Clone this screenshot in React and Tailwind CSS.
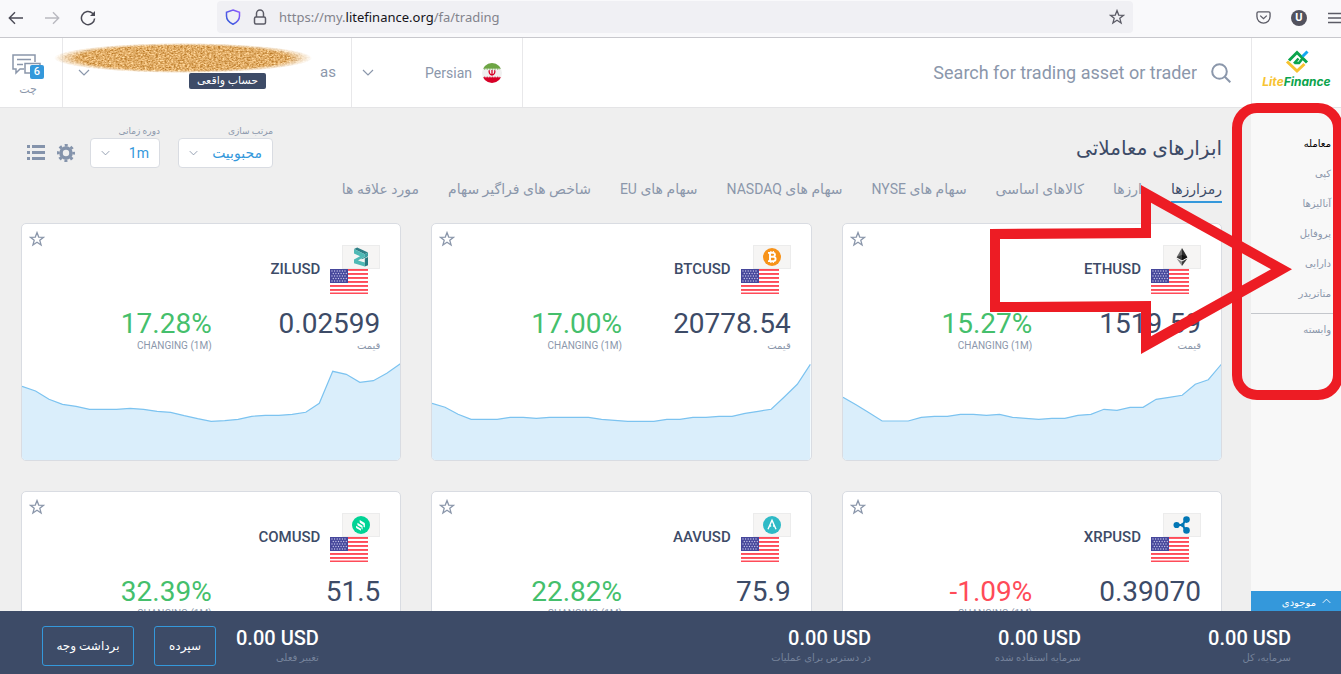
import React from "react";

const LATIN_FA = "font-[Roboto,'DejaVu_Sans',sans-serif]";

const SPARK_ZIL = [24.3, 29, 37.3, 42.3, 44.3, 47.3, 47.3, 47.3, 46.3, 47.3, 49.3, 50.3, 53.7, 56.7, 59.3, 58.7, 57.3, 54.3, 53.3, 53.3, 52.3, 50.3, 41.3, 9.3, 12.3, 20.3, 18.7, 11.3, 1.7];
const SPARK_BTC = [41.3, 45.3, 52.3, 57.3, 57.3, 57.3, 55.3, 55.3, 56.3, 55.3, 55.3, 55.3, 55.3, 57.3, 58.3, 59.3, 59.3, 59.3, 57.3, 57.3, 55.3, 55.3, 54.3, 54.3, 51.3, 49.3, 47.3, 35, 22.3, 2.3];
const SPARK_ETH = [35.3, 42.7, 50.7, 59, 59, 59, 55.3, 54.3, 54.3, 52.3, 52.3, 53.3, 52.3, 55.3, 56.3, 57.3, 56.3, 56.3, 53.3, 52.3, 47.3, 48.3, 45.3, 45.3, 37.3, 35.3, 33.3, 22.3, 17.7, 2.3];

const ASSETS = [
  { symbol: "ETHUSD", price: "1519.59", change: "15.27%", coin: EthCoin, points: SPARK_ETH },
  { symbol: "BTCUSD", price: "20778.54", change: "17.00%", coin: BtcCoin, points: SPARK_BTC },
  { symbol: "ZILUSD", price: "0.02599", change: "17.28%", coin: ZilCoin, points: SPARK_ZIL },
  { symbol: "XRPUSD", price: "0.39070", change: "-1.09%", coin: XrpCoin, points: SPARK_BTC },
  { symbol: "AAVUSD", price: "75.9", change: "22.82%", coin: AaveCoin, points: SPARK_ETH },
  { symbol: "COMUSD", price: "51.5", change: "32.39%", coin: CompCoin, points: SPARK_ZIL },
];

const TABS = ["رمزارزها", "ارزها", "کالاهای اساسی", "سهام های NYSE", "سهام های NASDAQ", "سهام های EU", "شاخص های فراگیر سهام", "مورد علاقه ها"];
const MENU = ["معامله", "کپی", "آنالیزها", "پروفایل", "دارایی", "متاتریدر"];
const BALANCES = ["سرمایه، کل", "سرمایه استفاده شده", "در دسترس برای عملیات"];

function EthCoin() {
  return (
    <svg viewBox="0 0 20 20" className="size-5">
      <path d="M10 1 4.6 10.2 10 13.3Z" fill="#6b6b6b" />
      <path d="M10 1v12.3l5.4-3.1Z" fill="#2b2b2b" />
      <path d="M10 7.8 4.6 10.2 10 13.3Z" fill="#3a3a3a" />
      <path d="M10 7.8v5.5l5.4-3.1Z" fill="#111" />
      <path d="M4.6 11.4 10 19v-4.5Z" fill="#8a8a8a" />
      <path d="M15.4 11.4 10 19v-4.5Z" fill="#3a3a3a" />
    </svg>
  );
}

function BtcCoin() {
  return (
    <svg viewBox="0 0 20 20" className="size-5">
      <circle cx="10" cy="10" r="9" fill="#f7931a" />
      <g fill="none" stroke="#fff" strokeWidth="1.9">
        <path d="M8 5.800v8.400M6 5.900h5a1.900 1.900 0 0 1 0 3.900H8M11 9.900h.5a2.100 2.100 0 0 1 0 4.200H6" />
        <path d="M8.900 4v2M11.300 4v2M8.900 14v2M11.300 14v2" strokeWidth="1.200" />
      </g>
    </svg>
  );
}

function ZilCoin() {
  return (
    <svg viewBox="0 0 20 20" className="size-5">
      <path d="M3 2 6.2.6 17 5.4l-3.2 1.9Z" fill="#2f7f86" />
      <path d="M3 2v4.400l6 2.800L3 12.600v3.600l10.800 3.400v-4.200L7 13.400l6.800-4V7.300Z" fill="#4fb9b5" />
      <path d="M13.800 7.300 17 5.400v3.900l-4.500 2.700-3 .2 4.300-2.800Z" fill="#3d9ea0" />
      <path d="M8.600 13.400 13.800 10.900v4Z" fill="#f6f5f4" />
      <path d="M13.800 11.600 17 9.900v8.300l-3.200 1.400Z" fill="#2a7a80" />
    </svg>
  );
}

function XrpCoin() {
  return (
    <svg viewBox="0 0 20 20" className="size-5">
      <path d="M5 10h5.500l3-5M10.500 10l3 5" fill="none" stroke="#0277b5" strokeWidth="2.200" />
      <circle cx="4.600" cy="10" r="3.100" fill="#0277b5" />
      <circle cx="14.500" cy="4.600" r="3.300" fill="#0277b5" />
      <circle cx="14.500" cy="15.400" r="3.300" fill="#0277b5" />
      <circle cx="10.600" cy="10" r="2" fill="#0277b5" />
    </svg>
  );
}

function AaveCoin() {
  return (
    <svg viewBox="0 0 20 20" className="size-5">
      <circle cx="10" cy="10" r="9" fill="#2ebac6" />
      <path d="m6 14.2 4-9 4 9M7.6 11h1.6M11 11h1.6" fill="none" stroke="#fff" strokeWidth="1.4" />
    </svg>
  );
}

function CompCoin() {
  return (
    <svg viewBox="0 0 20 20" className="size-5">
      <circle cx="10" cy="10" r="9" fill="#00d395" />
      <g fill="#fff">
        <path d="m5 10.800 5 2.900v2.100L5.600 13.200a1.200 1.200 0 0 1-.6-1Z" />
        <path d="m6.400 7.700 4.600 2.700c.4.200.6.600.6 1v3.100l-1-.6v-1.400L7 10.400a1.200 1.200 0 0 1-.6-1Z" />
        <path d="m8.700 5 4.600 2.700c.4.200.6.600.6 1v3.900l-1.400-.8V9.900L9.300 8a1.200 1.200 0 0 1-.6-1Z" />
      </g>
    </svg>
  );
}

function UsFlag() {
  return (
    <svg viewBox="0 0 38 25" className="h-[25px] w-[38px]">
      <rect width="38" height="25" fill="#fff" />
      {[0, 4, 8, 12, 16, 20, 23.5].map((y) => (
        <rect key={y} y={y} width="38" height="1.9" fill="#ff4b58" />
      ))}
      <rect width="18" height="14" fill="#46479b" />
      {[2, 4.5, 7, 9.5, 12].map((y, row) =>
        [2, 4.6, 7.2, 9.8, 12.4, 15].map((x) => (
          <circle key={`${x}-${y}`} cx={x + (row % 2 ? 1.3 : 0)} cy={y} r="0.65" fill="#c9c9ec" />
        ))
      )}
    </svg>
  );
}

function IranFlag() {
  return (
    <svg viewBox="0 0 20 20" className="size-5 shrink-0">
      <clipPath id="flag-round"><circle cx="10" cy="10" r="10" /></clipPath>
      <g clipPath="url(#flag-round)">
        <rect width="20" height="20" fill="#f0f0f0" />
        <rect width="20" height="5.6" fill="#6da544" />
        <rect y="14.4" width="20" height="5.6" fill="#d80027" />
        <path d="M2 6h16" stroke="#6da544" strokeDasharray="1.3 1.3" />
        <path d="M2 14.2h16" stroke="#d80027" strokeDasharray="1.3 1.3" />
      </g>
      <path d="M7.4 7.2c-.8 2 .2 4.4 2.6 4.8 2.400-.4 3.400-2.800 2.600-4.800M10 7v5.500" fill="none" stroke="#d80027" strokeWidth="1.300" />
    </svg>
  );
}

function Chevron({ className, up }) {
  return (
    <svg viewBox="0 0 12 7" className={className} fill="none" stroke="currentColor" strokeWidth="1.2">
      <path d={up ? "m1 6 5-5 5 5" : "m1 1 5 5 5-5"} />
    </svg>
  );
}

function Star({ className }) {
  return (
    <svg viewBox="0 0 16 16" className={className} fill="none" stroke="currentColor" strokeWidth="1.3">
      <path d="m8 1.600 1.700 4.500 4.800.200-3.700 3 1.300 4.700L8 11.300 3.900 14l1.300-4.700-3.700-3 4.800-.200Z" />
    </svg>
  );
}

function BrowserBar() {
  return (
    <div className="flex h-[38px] shrink-0 items-center border-b border-[#c8c8cd] bg-[#f9f9fb] text-[#5b5b66]">
      <div className="mb-[2px] flex w-[217px] shrink-0 items-center gap-5 pl-2">
        <button type="button" aria-label="Back" className="text-[#4a4a55]">
          <svg viewBox="0 0 16 16" className="size-4" fill="none" stroke="currentColor" strokeWidth="1.400"><path d="M15 8H1.500M7 2.200 1.300 8 7 13.800" /></svg>
        </button>
        <button type="button" aria-label="Forward" className="text-[#b9b9c0]">
          <svg viewBox="0 0 16 16" className="size-4" fill="none" stroke="currentColor" strokeWidth="1.400"><path d="M1 8h13.500M9 2.200 14.700 8 9 13.800" /></svg>
        </button>
        <button type="button" aria-label="Reload" className="text-[#4a4a55]">
          <svg viewBox="0 0 16 16" className="size-4" fill="none" stroke="currentColor" strokeWidth="1.500"><path d="M14.600 8.500A6.600 6.600 0 1 1 12.500 3.200L14 4.700" /><path d="M15 1v5h-5Z" fill="currentColor" stroke="none" /></svg>
        </button>
      </div>
      <div className="mb-[3px] flex h-8 flex-1 items-center rounded bg-[#f0f0f4] px-2">
        <svg viewBox="0 0 16 16" className="size-4" fill="none" strokeWidth="1.500">
          <linearGradient id="shield" x1="0" y1="1" x2="1" y2="0"><stop stopColor="#2b5bd7" /><stop offset="1" stopColor="#9059ff" /></linearGradient>
          <path d="M8 1 14.500 3.200V7c0 4-2.700 6.500-6.500 8.300C4.200 13.500 1.500 11 1.500 7V3.200Z" stroke="url(#shield)" />
        </svg>
        <svg viewBox="0 0 14 16" className="ml-3 h-4 w-[14px]" fill="none" stroke="currentColor" strokeWidth="1.500"><rect x="1.500" y="8" width="11" height="7" rx="1.500" /><path d="M3.500 8V4.500a3.500 3.500 0 0 1 7 0V8" /></svg>
        <span className="ml-3 pt-[2px] font-['Noto_Sans',sans-serif] text-[13px] text-[#83838c]">
          https://my.<span className="text-[#15141a]">litefinance.org</span>/fa/trading
        </span>
        <button type="button" aria-label="Bookmark" className="ml-auto"><Star className="size-4" /></button>
      </div>
      <div className="mb-[2px] flex w-[208px] shrink-0 items-center justify-end gap-5">
        <svg viewBox="0 0 16 16" className="size-[15px]" fill="none" stroke="currentColor" strokeWidth="1.400"><path d="M2.500 2h11a1.500 1.500 0 0 1 1.500 1.500V7A7 7 0 0 1 1 7V3.500A1.500 1.500 0 0 1 2.500 2Z" /><path d="m4.500 6 3.500 3.200L11.500 6" /></svg>
        <span className="size-4 rounded-full bg-[#52525e] text-center font-[Roboto,sans-serif] text-[11px] leading-4 font-bold text-white">U</span>
        <button type="button" aria-label="Menu">
          <svg viewBox="0 0 14 12" className="h-3 w-[14px]" stroke="currentColor" strokeWidth="1.300"><path d="M1 1.500h13M1 6h13M1 10.500h13" /></svg>
        </button>
      </div>
    </div>
  );
}

function Logo() {
  return (
    <a href="#home" className="flex w-[90px] shrink-0 flex-col items-center border-l border-[#e8e8ea] pt-3">
      <svg viewBox="0 0 24 24" className="size-6" fill="none" strokeWidth="3">
        <path d="m2 11.500 10 9.500 7.500-7" stroke="#f7c331" />
        <path d="M4 10.500 12 2.500l10 10" stroke="#0ba44c" />
        <path d="M9.500 13h4.500l3.500-4.500M9 13.500l4.500-5" stroke="#0ba44c" strokeWidth="2.600" />
        <path d="m17.500 6.500 5-5" stroke="#12a8f0" />
      </svg>
      <span dir="ltr" className="font-[Inter,sans-serif] text-[12px] leading-4 font-bold text-[#0ba44c] italic">
        <span className="text-[#f7c331]">Lite</span>Finance
      </span>
    </a>
  );
}

function Header() {
  return (
    <header className="relative flex h-[70px] shrink-0 border-b border-[#e4e4e6] bg-white text-[#8b97ab]">
      <Logo />
      <label className="flex flex-1 items-center gap-[14px] pr-5">
        <svg viewBox="0 0 20 20" className="size-5" fill="none" stroke="currentColor" strokeWidth="2"><circle cx="8.500" cy="8.500" r="7.300" /><path d="m13.800 13.800 5.500 5.500" /></svg>
        <input aria-label="Search" placeholder="Search for trading asset or trader" className="min-w-0 flex-1 text-[18px] outline-none placeholder:text-[#8b97ab]" />
      </label>
      <label className="relative flex w-[172px] shrink-0 items-center gap-[10px] border-x border-[#e8e8ea] pr-5">
        <IranFlag />
        <select aria-label="Language" className="flex-1 appearance-none bg-transparent pt-0.5 text-[14px] outline-none"><option>Persian</option></select>
        <Chevron className="absolute left-[10px] h-[7px] w-3" />
      </label>
      <button type="button" className="flex w-[288px] shrink-0 items-center pr-[15px] pl-[15px] text-[15px]">
        as
        <span className="mt-[17px] mr-[54px] rounded-xs bg-[#3d4b67] px-2 text-[11px] leading-4 text-white">حساب واقعی</span>
        <Chevron className="mr-auto h-[7px] w-3" />
      </button>
      <button type="button" className="flex w-[63px] shrink-0 flex-col items-center border-r border-[#e8e8ea] pt-4 pr-[6px] text-[11px]">
        <span className="relative">
          <svg viewBox="0 0 32 26" className="h-[26px] w-8" fill="none" stroke="currentColor" strokeWidth="1.500">
            <path d="M23 8V1H1v14h3v4l4-4h4M13 9.500h15V19H13ZM5 5.500h14M5 10.500h6" />
          </svg>
          <span className="absolute top-[11px] left-[18px] size-[14px] rounded-xs bg-[#3498db] text-[11px] leading-[14px] font-medium text-white">6</span>
        </span>
        <span className="mt-0.5 leading-4">چت</span>
      </button>
      <svg viewBox="0 0 258 30" className="absolute top-[5px] left-[54px] h-[30px] w-[258px]">
        <defs>
          <radialGradient id="sand-fade"><stop offset="0.820" stopColor="#fff" /><stop offset="1" stopColor="#000" /></radialGradient>
          <mask id="sand-mask"><ellipse cx="129" cy="15" rx="129" ry="15" fill="url(#sand-fade)" /></mask>
          <filter id="sand-grain" x="0" y="0" width="100%" height="100%" colorInterpolationFilters="sRGB">
            <feTurbulence type="fractalNoise" baseFrequency="0.450 0.700" numOctaves="3" seed="4" />
            <feColorMatrix values="0.500 0 0 0 0.630 0.650 0 0 0 0.350 0.800 0 0 0 0.000 0 0 0 0 1" />
          </filter>
        </defs>
        <g mask="url(#sand-mask)"><rect width="258" height="30" filter="url(#sand-grain)" /></g>
      </svg>
    </header>
  );
}

function Filter({ label, value, width }) {
  return (
    <label className={`flex flex-col ${width}`}>
      <span className="text-[9px] leading-[14px] text-[#8b97ab]">{label}</span>
      <span className="relative flex h-[30px] items-center rounded-sm border border-[#d9dce2] bg-white">
        <select className="w-full appearance-none bg-transparent pr-[10px] text-[14px] text-[#3498db] outline-none"><option>{value}</option></select>
        <Chevron className="absolute left-[10px] h-[6px] w-[9px] text-[#8b97ab]" />
      </span>
    </label>
  );
}

function Toolbar() {
  return (
    <div className="flex items-end justify-between">
      <h1 className="pb-1 text-[20px] leading-8 text-[#3d4b67]">ابزارهای معاملاتی</h1>
      <div className="flex items-end gap-[18px] pl-[6px]">
        <Filter label="مرتب سازی" value="محبوبیت" width="w-[95px]" />
        <Filter label="دوره زمانی" value="1m" width="w-[70px]" />
        <div className="-mr-[3px] flex h-[30px] items-center gap-3 text-[#8493ab]">
          <button type="button" aria-label="Settings">
            <svg viewBox="0 0 18 18" className="size-[18px]" fill="none" stroke="currentColor">
              <circle cx="9" cy="9" r="5" strokeWidth="3.600" />
              <circle cx="9" cy="9" r="7.700" strokeWidth="2.600" strokeDasharray="3.024 3.024" strokeDashoffset="1.512" />
            </svg>
          </button>
          <button type="button" aria-label="List view">
            <svg viewBox="0 0 18 16" className="h-4 w-[18px]" fill="currentColor"><path d="M0 0h3v3H0zM5 0h13v3H5zM0 6h3v3H0zM5 6h13v3H5zM0 12h3v3H0zM5 12h13v3H5z" /></svg>
          </button>
        </div>
      </div>
    </div>
  );
}

function Sparkline({ points }) {
  const step = 380 / (points.length - 1);
  const line = points.map((y, i) => `${(i * step).toFixed(1)},${y}`).join(" ");
  return (
    <svg viewBox="0 0 380 98" preserveAspectRatio="none" className="mt-auto h-[98px] w-full">
      <polygon points={`0,98 ${line} 380,98`} fill="#daeefb" />
      <polyline points={line} fill="none" stroke="#7cc3f0" strokeWidth="1.200" />
    </svg>
  );
}

function AssetCard({ symbol, price, change, coin: Coin, points }) {
  const tone = change.startsWith("-") ? "text-[#ff4b58]" : "text-[#45bf6c]";
  return (
    <article className="flex h-[238px] flex-col overflow-hidden rounded-[5px] border border-[#d9dce2] bg-white">
      <div className="flex h-[70px] shrink-0 items-center pr-5 pl-[7px]">
        <div className="mt-[21px] flex w-[50px] flex-col">
          <span className="flex h-6 w-[38px] items-center justify-center border border-[#ececec] bg-[#f6f5f4]"><Coin /></span>
          <span className="mr-3"><UsFlag /></span>
        </div>
        <h2 className="mt-[20px] mr-[10px] text-[15px] font-medium text-[#3d4b67]">{symbol}</h2>
        <button type="button" aria-label="Add to favourites" className="mt-[7px] mr-auto self-start text-[#8b97ab]"><Star className="size-4" /></button>
      </div>
      <dl className="mt-[14px] grid grid-cols-2 pr-5 pl-[21px] text-[10px] leading-3 text-[#8b97ab]">
        <div className="flex flex-col-reverse">
          <dt>قیمت</dt>
          <dd dir="ltr" className="text-right text-[28px] leading-8 text-[#3d4b67]">{price}</dd>
        </div>
        <div className="flex flex-col-reverse">
          <dt dir="ltr" className="text-right">CHANGING (1M)</dt>
          <dd dir="ltr" className={`text-right text-[28px] leading-8 ${tone}`}>{change}</dd>
        </div>
      </dl>
      <Sparkline points={points} />
    </article>
  );
}

function Sidebar() {
  return (
    <aside className="flex w-[90px] shrink-0 flex-col bg-[#f8f8f8] text-[10px] text-[#8b97ab]">
      <nav className="flex flex-col pt-[21px]">
        {MENU.map((item, i) => (
          <a key={item} href={`#menu-${i}`} className={`pr-[10px] leading-[30px] ${i === 0 ? "text-black" : ""}`}>{item}</a>
        ))}
        <a href="#affiliate" className="mt-1 border-t border-[#c4c7cc] pr-[10px] leading-[32px]">وابسته</a>
      </nav>
      <button type="button" className="mt-auto flex h-5 items-center gap-[6px] bg-[#3498db] pr-[10px] text-white">
        <Chevron up className="h-[6px] w-[9px]" />
        <span className="pt-0.5">موجودی</span>
      </button>
    </aside>
  );
}

function Balance({ label, className = "" }) {
  return (
    <div className={`flex flex-col ${className}`}>
      <span dir="ltr" className="text-right text-[20px] leading-6 font-medium whitespace-nowrap text-white">0.00 USD</span>
      <span className="text-[10px] leading-4 whitespace-nowrap text-[#76839b]">{label}</span>
    </div>
  );
}

function Footer() {
  return (
    <footer className="flex h-[63px] shrink-0 items-center bg-[#3d4b67] pt-[7px] pr-[50px] pl-[42px]">
      {BALANCES.map((label) => (
        <Balance key={label} label={label} className="w-[210px]" />
      ))}
      <Balance label="تغییر فعلی" className="mr-auto" />
      <div className="mr-5 flex gap-5 text-[12px] text-white">
        <button type="button" className="h-10 w-[62px] rounded-[3px] border border-[#3498db]">سپرده</button>
        <button type="button" className="h-10 w-[92px] rounded-[3px] border border-[#3498db]">برداشت وجه</button>
      </div>
    </footer>
  );
}

function Markup() {
  return (
    <svg viewBox="986 100 355 305" className="pointer-events-none absolute top-[100px] right-0 h-[305px] w-[355px]">
      <rect x="1237" y="108" width="101" height="287" rx="20" fill="none" stroke="#ed1c24" strokeWidth="10" />
      <path fillRule="evenodd" fill="#ed1c24" d="M990 229 1141 228V185L1292 269.300 1141 354V312H990ZM1000 239V302L1151 301V336.300L1271 269.300 1151 202.700V238Z" />
    </svg>
  );
}

export default function App() {
  return (
    <div className={`relative flex h-screen flex-col overflow-hidden bg-[#efefef] ${LATIN_FA}`}>
      <BrowserBar />
      <div dir="rtl" className="flex min-h-0 flex-1 flex-col">
        <Header />
        <div className="flex min-h-0 flex-1">
          <Sidebar />
          <main className="flex min-w-0 flex-1 flex-col overflow-hidden pt-4 pr-[29px] pl-[21px]">
            <Toolbar />
            <nav className="mt-[9px] flex gap-[29px] text-[14px] whitespace-nowrap text-[#8b97ab]">
              {TABS.map((tab, i) => (
                <a key={tab} href={`#tab-${i}`} className={`border-b-2 leading-6 ${i === 0 ? "border-[#3498db] text-[#3d4b67]" : "border-transparent"}`}>{tab}</a>
              ))}
            </nav>
            <div className="mt-5 grid shrink-0 grid-cols-3 gap-[30px]">
              {ASSETS.map((asset) => (
                <AssetCard key={asset.symbol} {...asset} />
              ))}
            </div>
          </main>
        </div>
        <Footer />
      </div>
      <Markup />
    </div>
  );
}
